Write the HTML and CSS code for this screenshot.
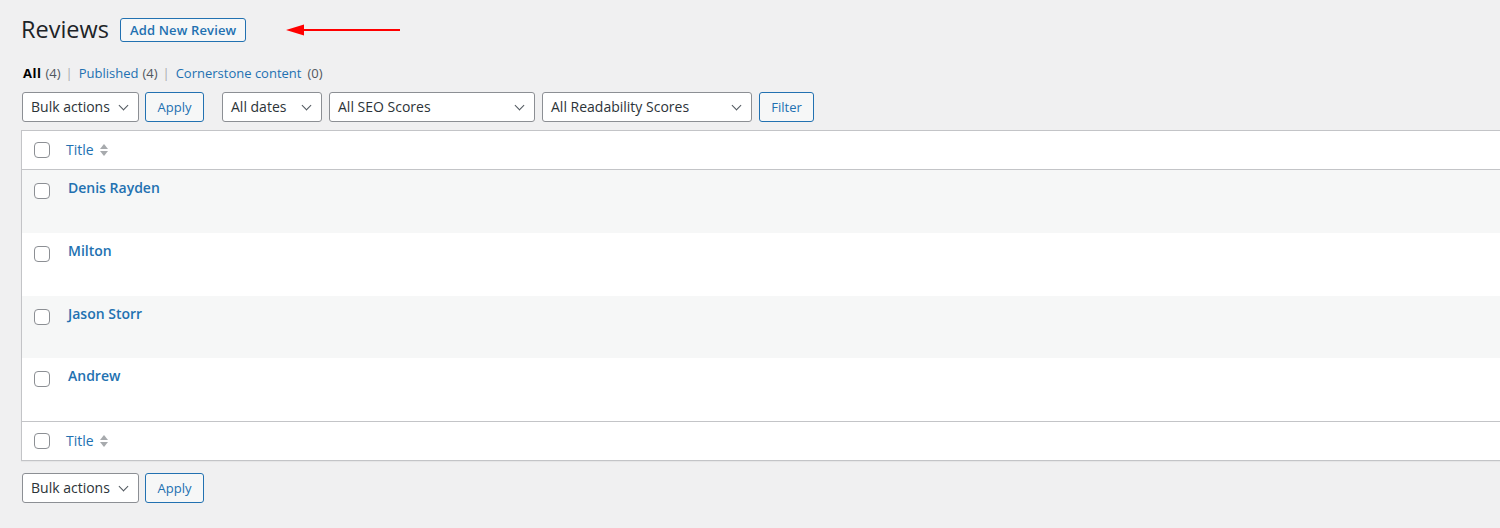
FILE: index.html
```html
<!DOCTYPE html>
<html>
<head>
<meta charset="utf-8">
<link rel="stylesheet" href="styles.css">
</head>
<body>
<div class="wrap">
  <div class="heading-row">
    <h1 class="page-title">Reviews</h1>
    <a class="page-title-action">Add New Review</a>
    <svg class="red-arrow" width="116" height="12" viewBox="0 0 116 12">
      <line x1="14" y1="6" x2="114" y2="6" stroke="#ff0000" stroke-width="2.2"/>
      <polygon points="0,6 18,0.5 18,11.5" fill="#ff0000"/>
    </svg>
  </div>
  <ul class="subsubsub">
    <li><span class="current">All</span><span class="count">(4)</span><span class="sep">|</span></li>
    <li><a>Published</a><span class="count">(4)</span><span class="sep">|</span></li>
    <li><a>Cornerstone content</a><span class="count wide">(0)</span></li>
  </ul>
  <div class="tablenav top">
    <div class="select w-bulk">Bulk actions<span class="chev"></span></div>
    <button class="btn w-apply">Apply</button>
    <div class="select w-dates">All dates<span class="chev"></span></div>
    <div class="select w-seo">All SEO Scores<span class="chev"></span></div>
    <div class="select w-read">All Readability Scores<span class="chev"></span></div>
    <button class="btn w-filter">Filter</button>
  </div>
  <div class="table">
    <div class="thead row-head">
      <span class="cb"></span>
      <a class="col-title">Title</a>
      <span class="sort"><i class="up"></i><i class="down"></i></span>
    </div>
    <div class="trow alt"><span class="cb"></span><a class="row-title">Denis Rayden</a></div>
    <div class="trow"><span class="cb"></span><a class="row-title">Milton</a></div>
    <div class="trow alt"><span class="cb"></span><a class="row-title">Jason Storr</a></div>
    <div class="trow"><span class="cb"></span><a class="row-title">Andrew</a></div>
    <div class="tfoot row-head">
      <span class="cb"></span>
      <a class="col-title">Title</a>
      <span class="sort"><i class="up"></i><i class="down"></i></span>
    </div>
  </div>
  <div class="tablenav bottom">
    <div class="select w-bulk">Bulk actions<span class="chev"></span></div>
    <button class="btn w-apply">Apply</button>
  </div>
</div>
</body>
</html>
```
FILE: styles.css
```css
html, body {
  margin: 0;
  padding: 0;
  background: #f0f0f1;
  overflow: hidden;
}
body {
  font-family: "Open Sans", "Noto Sans", sans-serif;
  font-size: 13px;
  color: #3c434a;
  width: 1500px;
  height: 528px;
}
.wrap {
  padding: 0 0 0 21px;
}
.heading-row {
  display: flex;
  align-items: center;
  height: 60px;
}
.page-title {
  font-size: 23.5px;
  font-weight: 400;
  margin: 0;
  color: #1d2327;
  line-height: 1;
}
.page-title-action {
  margin-left: 11px;
  border: 1px solid #2271b1;
  border-radius: 3px;
  color: #2271b1;
  font-size: 13px;
  font-weight: 600;
  height: 22px;
  line-height: 22px;
  padding: 0 9px;
  background: #f6f7f7;
  box-sizing: content-box;
  letter-spacing: 0.15px;
}
.red-arrow {
  margin-left: 40px;
  display: block;
}
.subsubsub {
  list-style: none;
  margin: 3px 0 0 0;
  padding: 0;
  display: flex;
  height: 20px;
  align-items: center;
  font-size: 13px;
}
.subsubsub li {
  display: flex;
  align-items: center;
}
.subsubsub .current { color: #000; font-weight: 700; letter-spacing: 0.5px; margin-left: 2px; }
.subsubsub a { color: #2271b1; }
.subsubsub .count { color: #50575e; margin-left: 4px; }
.subsubsub .count.wide { margin-left: 6px; }
.subsubsub .sep { color: #a7aaad; margin: 0 6px 0 5px; }
.tablenav {
  display: flex;
  align-items: center;
  height: 30px;
}
.tablenav.top { margin-top: 9px; }
.tablenav.bottom { margin-top: 12px; }
.select {
  box-sizing: border-box;
  height: 30px;
  border: 1px solid #8c8f94;
  border-radius: 3px;
  background: #fff;
  color: #2c3338;
  font-size: 14px;
  display: flex;
  align-items: center;
  padding-left: 8px;
  padding-bottom: 1px;
  position: relative;
}
.chev {
  position: absolute;
  right: 11px;
  top: 9px;
  width: 6px;
  height: 6px;
  border-right: 1.5px solid #50575e;
  border-bottom: 1.5px solid #50575e;
  transform: rotate(45deg);
}
.btn {
  box-sizing: border-box;
  height: 30px;
  border: 1px solid #2271b1;
  border-radius: 3px;
  background: #f6f7f7;
  color: #2271b1;
  font-family: inherit;
  font-size: 13px;
  padding: 0 10px;
}
.w-bulk { width: 117px; margin-left: 1px; }
.w-apply { width: 59px; margin-left: 6px; }
.w-dates { width: 100px; margin-left: 18px; }
.w-seo { width: 206px; margin-left: 7px; }
.w-read { width: 210px; margin-left: 7px; }
.w-filter { width: 55px; margin-left: 7px; }
.table {
  margin-top: 8px;
  width: 1500px;
  border: 1px solid #c3c4c7;
  box-shadow: 0 1px 1px rgba(0,0,0,0.04);
  background: #fff;
}
.row-head {
  display: flex;
  align-items: center;
  height: 38px;
  background: #fff;
}
.thead { border-bottom: 1px solid #c3c4c7; }
.tfoot { border-top: 1px solid #c3c4c7; }
.cb {
  display: inline-block;
  box-sizing: border-box;
  width: 16px;
  height: 16px;
  border: 1px solid #8c8f94;
  border-radius: 4px;
  background: #fff;
  margin-left: 12px;
  flex: none;
}
.col-title {
  color: #2271b1;
  font-size: 14px;
  margin-left: 16px;
  margin-bottom: 2px;
}
.sort {
  display: inline-flex;
  flex-direction: column;
  margin-left: 6px;
  gap: 2px;
}
.sort i {
  width: 0;
  height: 0;
  border-left: 4px solid transparent;
  border-right: 4px solid transparent;
}
.sort .up { border-bottom: 5px solid #a7aaad; }
.sort .down { border-top: 5px solid #a7aaad; }
.trow {
  display: flex;
  align-items: flex-start;
  height: 61.75px;
  box-sizing: content-box;
  background: #fff;
  padding-top: 1px;
}
.trow.alt { background: #f6f7f7; }
.trow .cb { margin-top: 12px; }
.row-title {
  color: #2271b1;
  font-weight: 600;
  font-size: 14px;
  margin-left: 18px;
  margin-top: 7px;
}
```
